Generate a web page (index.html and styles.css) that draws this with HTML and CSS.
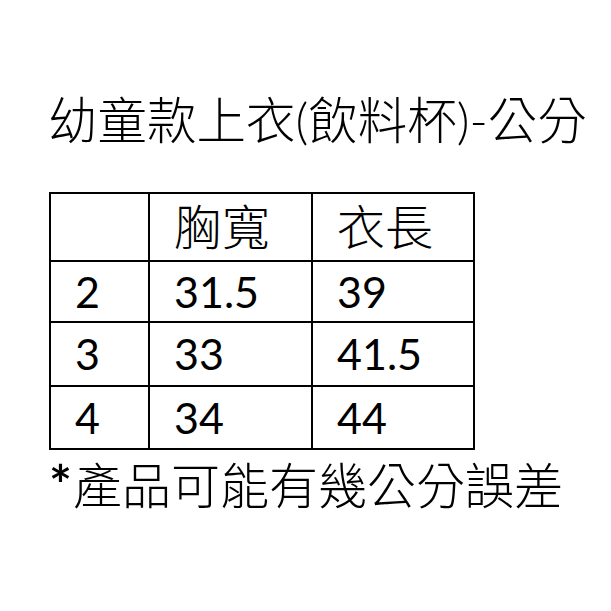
FILE: index.html
```html
<!DOCTYPE html>
<html lang="zh-Hant">
<head>
<meta charset="utf-8">
<link rel="stylesheet" href="styles.css">
</head>
<body>
<div class="page">
  <h1 class="title">幼童款上衣(飲料杯)-公分</h1>
  <table class="size-table">
    <colgroup>
      <col class="c1"><col class="c2"><col class="c3">
    </colgroup>
    <tr class="r-head"><td></td><td>胸寬</td><td>衣長</td></tr>
    <tr class="r-a"><td>2</td><td>31.5</td><td>39</td></tr>
    <tr class="r-b"><td>3</td><td>33</td><td>41.5</td></tr>
    <tr class="r-c"><td>4</td><td>34</td><td>44</td></tr>
  </table>
  <p class="note"><span class="star">*</span>產品可能有幾公分誤差</p>
</div>
</body>
</html>
```
FILE: styles.css
```css
html, body {
  margin: 0;
  padding: 0;
  background: #fff;
}
.page {
  width: 611px;
  height: 611px;
  padding: 96px 0 0 48px;
  box-sizing: border-box;
  font-family: Lato, "Noto Sans CJK TC", sans-serif;
  font-weight: 300;
  color: #000;
}
.title {
  margin: 0;
  font-size: 49.5px;
  font-weight: 300;
  line-height: 49px;
  white-space: nowrap;
}
.size-table {
  margin: 47px 0 0 1px;
  border-collapse: collapse;
  table-layout: fixed;
  font-size: 43px;
}
.size-table td {
  border: 2px solid #000;
  padding: 0 0 0 24px;
  vertical-align: middle;
  line-height: 42px;
  font-weight: 400;
}
.size-table .r-head td {
  font-size: 48px;
  font-weight: 300;
}
.c1 { width: 99px; }
.c2 { width: 163px; }
.c3 { width: 162px; }
.r-head { height: 68px; }
.r-a { height: 61px; }
.r-b { height: 64px; }
.r-c { height: 63px; }
.note {
  margin: 9px 0 0 1px;
  font-size: 49px;
  line-height: 50px;
  font-weight: 300;
  white-space: nowrap;
}
.star {
  font-family: Lato, sans-serif;
  font-weight: 700;
  font-size: 54px;
  line-height: 50px;
  margin-right: 1px;
}
```
